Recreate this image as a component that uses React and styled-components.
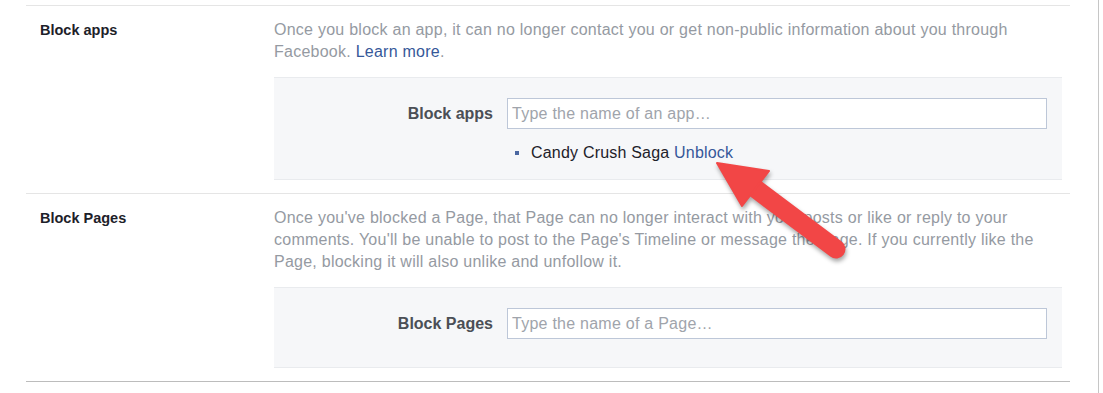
import styled, { createGlobalStyle } from 'styled-components'

const GlobalStyle = createGlobalStyle`
  body {
    margin: 0;
    background: #fff;
    font-family: 'Liberation Sans', Arial, Helvetica, sans-serif;
  }
`

const Page = styled.div`
  position: relative;
  box-sizing: border-box;
  width: 1099px;
  min-height: 393px;
  padding-top: 5px;
  border-right: 1px solid #c6c6c6;
`

const SettingsList = styled.div`
  margin-left: 26px;
  width: 1044px;
`

const Section = styled.section`
  display: grid;
  grid-template-columns: 248px 1fr;
  padding: 13px 8px 13px 0;
  border-top: 1px solid #e5e5e5;

  &:last-child {
    border-bottom: 1px solid #bcbcbc;
  }
`

const SectionTitle = styled.h3`
  margin: 0;
  padding-left: 14px;
  font-size: 14.5px;
  line-height: 22px;
  font-weight: bold;
  color: #1d2129;
`

const Description = styled.p`
  margin: 0;
  font-size: 16px;
  line-height: 22px;
  letter-spacing: 0.25px;
  color: #959aa2;
`

const Link = styled.a`
  color: #365899;
  text-decoration: none;
  cursor: pointer;
`

const FormBox = styled.div`
  display: grid;
  grid-template-columns: 219px 1fr;
  column-gap: 14px;
  margin-top: 14px;
  padding: 20px 15px ${(props) => props.$bottom}px 0;
  background: #f6f7f9;
  border-top: 1px solid #e9ebee;
  border-bottom: 1px solid #e9ebee;
`

const FieldLabel = styled.label`
  align-self: center;
  text-align: right;
  font-size: 16px;
  font-weight: bold;
  color: #4b4f56;
`

const TextInput = styled.input`
  box-sizing: border-box;
  width: 100%;
  height: 31px;
  padding: 0 4px;
  border: 1px solid #bdc7d8;
  background: #fff;
  font-family: inherit;
  font-size: 16px;
  letter-spacing: 0.25px;
  color: #1d2129;
  outline: none;

  &::placeholder {
    color: #a0a4ab;
  }
`

const BlockedList = styled.ul`
  grid-column: 2;
  margin: 13px 0 0;
  padding: 0 0 0 8px;
  list-style: none;
`

const BlockedItem = styled.li`
  display: flex;
  align-items: center;
  gap: 12px;
  font-size: 16px;
  line-height: 22px;
  letter-spacing: 0.2px;
  color: #1d2129;

  &::before {
    content: '';
    width: 4px;
    height: 4px;
    background: #4b67a1;
  }
`

const Arrow = styled.svg`
  position: absolute;
  left: 700px;
  top: 150px;
  overflow: visible;
  filter: drop-shadow(1px 3px 2px rgba(0, 0, 0, 0.35));
  pointer-events: none;
`

function App() {
  return (
    <Page>
      <GlobalStyle />
      <SettingsList>
        <Section>
          <SectionTitle>Block apps</SectionTitle>
          <div>
            <Description>
              Once you block an app, it can no longer contact you or get non-public information about you through
              Facebook. <Link>Learn more</Link>.
            </Description>
            <FormBox $bottom={15}>
              <FieldLabel htmlFor='blockApps'>Block apps</FieldLabel>
              <TextInput id='blockApps' placeholder='Type the name of an app…' />
              <BlockedList>
                <BlockedItem>
                  <span>
                    Candy Crush Saga <Link>Unblock</Link>
                  </span>
                </BlockedItem>
              </BlockedList>
            </FormBox>
          </div>
        </Section>
        <Section>
          <SectionTitle>Block Pages</SectionTitle>
          <div>
            <Description>
              Once you've blocked a Page, that Page can no longer interact with your posts or like or reply to your
              comments. You'll be unable to post to the Page's Timeline or message the Page. If you currently like the
              Page, blocking it will also unlike and unfollow it.
            </Description>
            <FormBox $bottom={28}>
              <FieldLabel htmlFor='blockPages'>Block Pages</FieldLabel>
              <TextInput id='blockPages' placeholder='Type the name of a Page…' />
            </FormBox>
          </div>
        </Section>
      </SettingsList>
      <Arrow width='150' height='110' viewBox='700 150 150 110'>
        <line x1='836' y1='249' x2='752' y2='186' stroke='#f24646' strokeWidth='19' strokeLinecap='round' />
        <polygon points='717,163 769,171 742,206' fill='#f24646' stroke='#f24646' strokeWidth='2' strokeLinejoin='round' />
      </Arrow>
    </Page>
  )
}

export default App
